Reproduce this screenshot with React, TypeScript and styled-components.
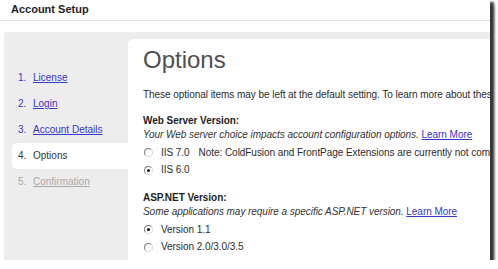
import styled, { createGlobalStyle } from "styled-components";

const GlobalStyle = createGlobalStyle`
  html, body {
    margin: 0;
    padding: 0;
    background: #ffffff;
  }
  body {
    font-family: "Liberation Sans", Arial, sans-serif;
    color: #2b2b2b;
  }
`;

const Frame = styled.div`
  width: 490px;
  height: 260px;
  background: #ffffff;
  display: flex;
  flex-direction: column;
  box-shadow: 3px 3px 2px 1px rgba(0, 0, 0, 0.72),
    5px 5px 3px rgba(0, 0, 0, 0.25);
  overflow: hidden;
`;

const TitleBar = styled.header`
  height: 20px;
  line-height: 18px;
  padding-left: 11px;
  border-bottom: 1px solid #e0e0e0;
  font-size: 11px;
  font-weight: bold;
  color: #1e1e1e;
`;

const Body = styled.div`
  flex: 1;
  display: flex;
  margin: 11px 0 0 4px;
  background: #ededed;
  border-top-left-radius: 3px;
  min-height: 0;
`;

const Steps = styled.ol`
  list-style: none;
  width: 124px;
  flex-shrink: 0;
  margin: 0;
  padding: 33px 0 0 8px;
  box-sizing: border-box;
`;

type StepState = "done" | "current" | "todo";

const Step = styled.li<{ $state: StepState }>`
  display: flex;
  height: 26px;
  line-height: 26px;
  padding-left: 6px;
  font-size: 10px;
  border-radius: 5px 0 0 5px;
  background: ${(p) => (p.$state === "current" ? "#ffffff" : "transparent")};
  color: ${(p) =>
    p.$state === "done" ? "#3535cf" : p.$state === "todo" ? "#a8a8a8" : "#333333"};
`;

const StepNum = styled.span`
  width: 15px;
`;

const StepLink = styled.a<{ $muted?: boolean }>`
  color: ${(p) => (p.$muted ? "#a8a8a8" : "#3535cf")};
  text-decoration: underline;
`;

const Panel = styled.main`
  flex: 1;
  margin-top: 7px;
  background: #ffffff;
  border-top-left-radius: 6px;
  padding: 7px 0 0 15px;
  overflow: hidden;
  white-space: nowrap;
  font-size: 10px;
  line-height: 14px;
  letter-spacing: -0.05px;
`;

const Heading = styled.h1`
  margin: 0;
  font-size: 24px;
  line-height: 28px;
  font-weight: normal;
  color: #4f4f4f;
  letter-spacing: 0;
`;

const Intro = styled.p`
  margin: 14px 0 0;
`;

const Section = styled.section`
  margin-top: 12px;
`;

const SectionTitle = styled.div`
  font-weight: bold;
  color: #1e1e1e;
`;

const Hint = styled.div`
  font-style: italic;
  color: #333333;
`;

const Link = styled.a`
  font-style: normal;
  color: #3535cf;
  text-decoration: underline;
`;

const Choices = styled.div`
  margin-top: 2px;
`;

const Choice = styled.label`
  display: flex;
  align-items: center;
  height: 17.5px;
`;

const Radio = styled.span<{ $on?: boolean }>`
  position: relative;
  flex-shrink: 0;
  width: 7px;
  height: 7px;
  margin: 0 8px 0 1px;
  border-radius: 50%;
  border: 1px solid;
  border-color: #7a7a7a #dcdcdc #dcdcdc #7a7a7a;
  background: #ffffff;
  &::after {
    content: "";
    display: ${(p) => (p.$on ? "block" : "none")};
    position: absolute;
    left: 2px;
    top: 2px;
    width: 3px;
    height: 3px;
    border-radius: 50%;
    background: #111111;
  }
`;

const Note = styled.span`
  margin-left: 9px;
`;

const steps: { label: string; state: StepState }[] = [
  { label: "License", state: "done" },
  { label: "Login", state: "done" },
  { label: "Account Details", state: "done" },
  { label: "Options", state: "current" },
  { label: "Confirmation", state: "todo" },
];

export default function App() {
  return (
    <>
      <GlobalStyle />
      <Frame>
        <TitleBar>Account Setup</TitleBar>
        <Body>
          <Steps>
            {steps.map((s, i) => (
              <Step key={s.label} $state={s.state}>
                <StepNum>{i + 1}.</StepNum>
                {s.state === "current" ? (
                  <span>{s.label}</span>
                ) : (
                  <StepLink href="#" $muted={s.state === "todo"}>
                    {s.label}
                  </StepLink>
                )}
              </Step>
            ))}
          </Steps>
          <Panel>
            <Heading>Options</Heading>
            <Intro>
              These optional items may be left at the default setting. To learn
              more about these options, click Learn More.
            </Intro>
            <Section>
              <SectionTitle>Web Server Version:</SectionTitle>
              <Hint>
                Your Web server choice impacts account configuration options.{" "}
                <Link href="#">Learn More</Link>
              </Hint>
              <Choices>
                <Choice>
                  <Radio />
                  IIS 7.0
                  <Note>
                    Note: ColdFusion and FrontPage Extensions are currently not
                    compatible with IIS 7.0
                  </Note>
                </Choice>
                <Choice>
                  <Radio $on />
                  IIS 6.0
                </Choice>
              </Choices>
            </Section>
            <Section>
              <SectionTitle>ASP.NET Version:</SectionTitle>
              <Hint>
                Some applications may require a specific ASP.NET version.{" "}
                <Link href="#">Learn More</Link>
              </Hint>
              <Choices>
                <Choice>
                  <Radio $on />
                  Version 1.1
                </Choice>
                <Choice>
                  <Radio />
                  Version 2.0/3.0/3.5
                </Choice>
              </Choices>
            </Section>
          </Panel>
        </Body>
      </Frame>
    </>
  );
}
